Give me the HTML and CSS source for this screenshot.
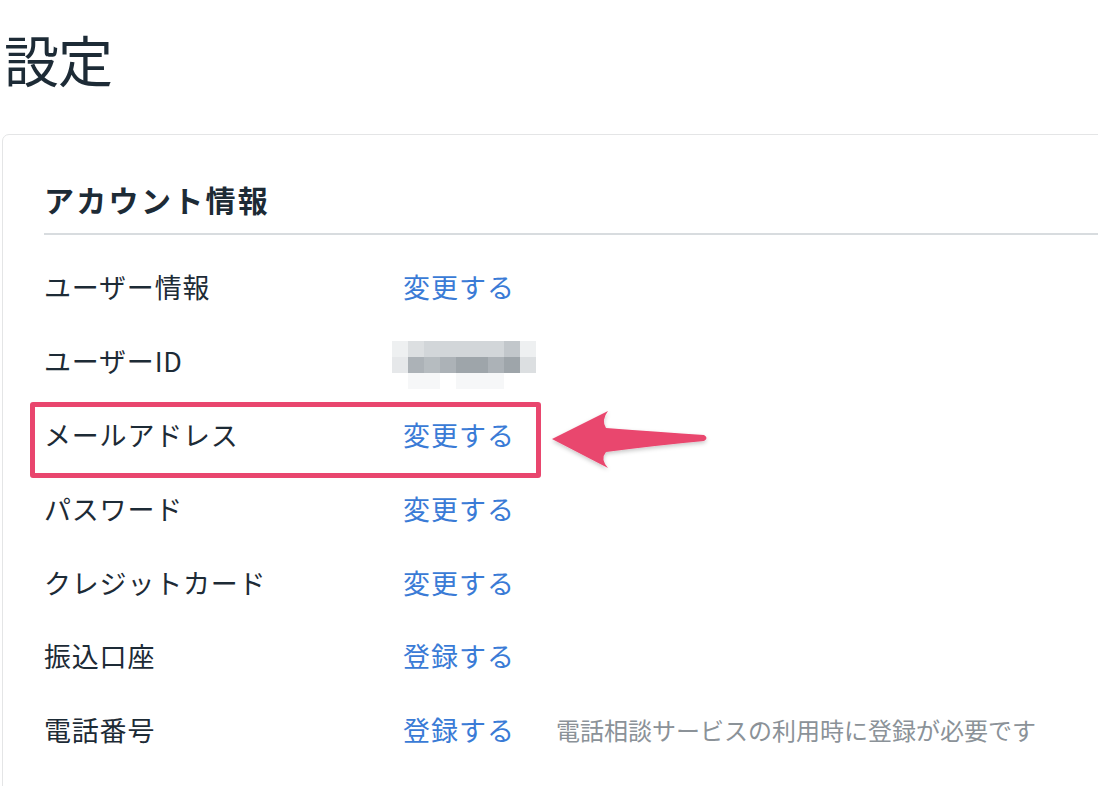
FILE: index.html
```html
<!DOCTYPE html>
<html lang="ja">
<head>
<meta charset="utf-8">
<link rel="stylesheet" href="styles.css">
</head>
<body>
<div class="page">
  <h1 class="page-title">設定</h1>
  <section class="card">
    <h2 class="card-title">アカウント情報</h2>
    <ul class="rows">
      <li class="row"><span class="label">ユーザー情報</span><a class="action">変更する</a></li>
      <li class="row"><span class="label">ユーザーID</span>
        <span class="blur">
          <i class="s1"></i><i class="s3"></i><i class="s4"></i><i class="s4"></i><i class="s4"></i><i class="s4"></i><i class="s4"></i><i class="s5"></i><i class="s1"></i><i class="s0"></i>
          <i class="s2"></i><i class="s7"></i><i class="s6"></i><i class="s7"></i><i class="s8"></i><i class="s8"></i><i class="s7"></i><i class="s8"></i><i class="s3"></i><i class="s0"></i>
          <i class="s0"></i><i class="s9"></i><i class="s9"></i><i class="s0"></i><i class="s9"></i><i class="s9"></i><i class="s9"></i><i class="s0"></i><i class="s0"></i><i class="s0"></i>
        </span>
      </li>
      <li class="row"><span class="label">メールアドレス</span><a class="action">変更する</a></li>
      <li class="row"><span class="label">パスワード</span><a class="action">変更する</a></li>
      <li class="row"><span class="label">クレジットカード</span><a class="action">変更する</a></li>
      <li class="row"><span class="label">振込口座</span><a class="action">登録する</a></li>
      <li class="row"><span class="label">電話番号</span><a class="action">登録する</a><span class="note">電話相談サービスの利用時に登録が必要です</span></li>
    </ul>
  </section>
  <div class="highlight"></div>
  <svg class="arrow" width="180" height="80" viewBox="540 400 180 80" xmlns="http://www.w3.org/2000/svg">
    <defs>
      <filter id="sh" x="-20%" y="-30%" width="140%" height="160%">
        <feDropShadow dx="0" dy="2" stdDeviation="2" flood-color="#000" flood-opacity="0.22"/>
      </filter>
    </defs>
    <path filter="url(#sh)" fill="#e9466e" d="M552,439 L608,411 Q601,420 606,428 Q660,432 704,435 Q709,438 704,441 Q660,445 606,452 Q600,459 608,468 Z"/>
  </svg>
</div>
</body>
</html>
```

FILE: styles.css
```css
html, body {
  margin: 0;
  padding: 0;
  background: #ffffff;
  overflow: hidden;
}
body {
  font-family: "Noto Sans CJK JP", "Noto Sans", sans-serif;
  color: #1d2b36;
}
.page {
  position: relative;
  padding: 0 0 0 2px;
  height: 786px;
  overflow: hidden;
}
.page-title {
  margin: 0;
  padding: 28px 0 0 2px;
  font-size: 55px;
  line-height: 60px;
  font-weight: 400;
  height: 106px;
  box-sizing: border-box;
  letter-spacing: -1px;
}
.card {
  margin-top: 28px;
  margin-right: -40px;
  border: 1.5px solid #e4e5e6;
  border-radius: 7px;
  padding: 36px 0 40px 41px;
}
.card-title {
  margin: 0;
  font-size: 30px;
  line-height: 56px;
  font-weight: 700;
  letter-spacing: 2.3px;
  padding-bottom: 6px;
  border-bottom: 2px solid #d8dcdf;
}
.rows {
  list-style: none;
  margin: 0;
  padding: 15px 0 0 0;
}
.row {
  display: flex;
  align-items: center;
  height: 73.8px;
  font-size: 27px;
}
.label {
  width: 359px;
  flex: none;
  letter-spacing: 0.8px;
}
.action {
  color: #3a7bd6;
  text-decoration: none;
  letter-spacing: 1px;
}
.note {
  margin-left: 41px;
  font-size: 24px;
  color: #8b9298;
  letter-spacing: 0;
}
.blur {
  display: grid;
  grid-template-columns: repeat(10, 16px);
  grid-template-rows: repeat(3, 16px);
  margin-left: -11px;
  margin-top: 8px;
}
.blur i { display: block; }
.s0 { background: #ffffff; }
.s1 { background: #eef0f1; }
.s2 { background: #e6e8ea; }
.s3 { background: #dcdfe1; }
.s4 { background: #d2d6d9; }
.s5 { background: #c2c7cb; }
.s6 { background: #b6bcc0; }
.s7 { background: #acb2b7; }
.s8 { background: #9ea5aa; }
.s9 { background: #f6f7f8; }
.highlight {
  position: absolute;
  left: 30px;
  top: 402px;
  width: 511px;
  height: 76px;
  box-sizing: border-box;
  border: 5px solid #e9466e;
  border-radius: 3px;
}
.arrow {
  position: absolute;
  left: 540px;
  top: 400px;
}
```
